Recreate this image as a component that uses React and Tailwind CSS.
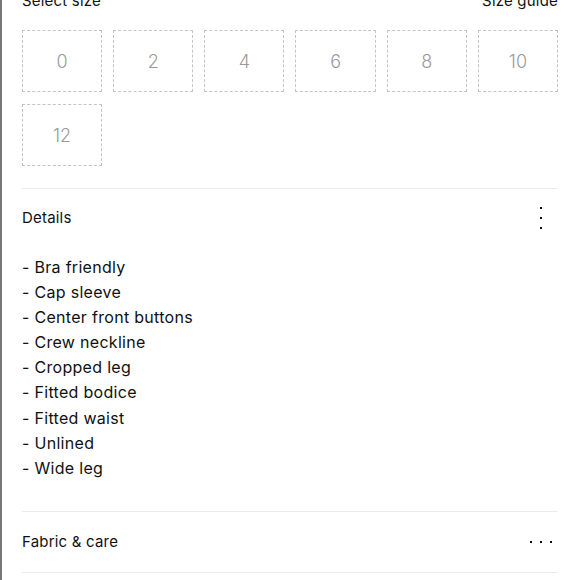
import React from 'react';

const sizes = ['0', '2', '4', '6', '8', '10', '12'];
const details = [
    'Bra friendly',
    'Cap sleeve',
    'Center front buttons',
    'Crew neckline',
    'Cropped leg',
    'Fitted bodice',
    'Fitted waist',
    'Unlined',
    'Wide leg',
];

const Dot = () => <span className="block w-[2px] h-[2px] bg-[#111]" />;

const App = () => {
    return (
        <div className="w-[580px] h-[580px] overflow-hidden bg-white text-[#111] font-['Inter',sans-serif]">
            <div className="border-l-2 border-[#777] pl-[20px] pr-[22px] -mt-[9px] min-h-[600px]">
                {/* size picker */}
                <div className="flex justify-between text-[15px] leading-[20px] tracking-[0.2px]">
                    <span>Select size</span>
                    <span>Size guide</span>
                </div>
                <div className="grid grid-cols-6 gap-x-[11px] gap-y-[12px] mt-[19px]">
                    {sizes.map((s) => (
                        <button
                            key={s}
                            className="h-[62px] border border-dashed border-[#c4c4c4] flex items-center justify-center text-[18px] font-light text-[#9a9a9a]"
                        >
                            {s}
                        </button>
                    ))}
                </div>

                {/* details */}
                <div className="mt-[22px] border-t border-[#ececec]">
                    <div className="flex items-center justify-between h-[58px]">
                        <span className="text-[15px] tracking-[0.2px]">Details</span>
                        <span className="flex flex-col gap-[8px] mr-[16px]">
                            <Dot />
                            <Dot />
                            <Dot />
                        </span>
                    </div>
                    <ul className="pt-[8px] pb-[30px] text-[16px] leading-[25.1px] tracking-[0.3px]">
                        {details.map((d) => (
                            <li key={d}>- {d}</li>
                        ))}
                    </ul>
                </div>

                {/* fabric & care */}
                <div className="border-t border-b border-[#ececec]">
                    <div className="flex items-center justify-between h-[60px]">
                        <span className="text-[15px] tracking-[0.2px]">Fabric &amp; care</span>
                        <span className="flex gap-[8px] mr-[6px]">
                            <Dot />
                            <Dot />
                            <Dot />
                        </span>
                    </div>
                </div>
            </div>
        </div>
    );
};

export default App;
